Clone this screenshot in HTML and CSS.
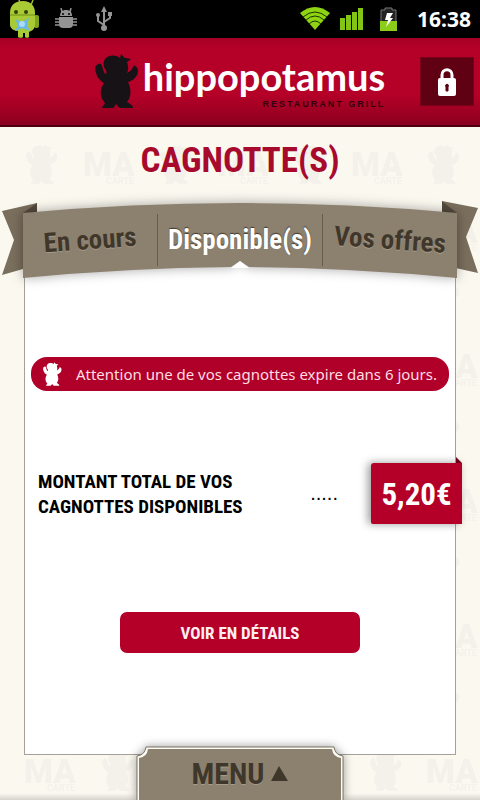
FILE: index.html
```html
<!DOCTYPE html>
<html lang="fr">
<head>
    <meta charset="UTF-8">
    <meta name="viewport" content="width=device-width, initial-scale=1.0">
    <title>Cagnotte(s)</title>
    <link rel="stylesheet" href="styles.css">
</head>
<body>
    <!-- watermark behind the whole page -->
    <svg class="watermark" aria-hidden="true">
        <defs>
            <symbol id="hippo" viewBox="0 0 44 54">
                <path d="M6 10C1 9-1 14 1 19C2 23 5 27 9 29C4 36 5 44 10 49C10 51 7 52 7 54H18C20 53 20 51 21 50C23 51 23 54 26 54H38C38 51 35 50 32 48C37 42 36 34 33 28C38 27 43 22 43 17C43 13 41 13 39 11L37 15C36 17 33 18 32 19C34 15 33 11 32 8L36 5L31 4C29 4 28 2 26 0L25 4C22 1 14 0 10 5C8 8 8 12 10 15C12 18 12 19 10 20C8 17 8 13 6 10Z"/>
            </symbol>
            <pattern id="tile" x="0" y="130" width="134" height="135" patternUnits="userSpaceOnUse">
                <use href="#hippo" x="26" y="14" width="32" height="40"/>
                <text class="wm-big" x="83" y="46">MA</text>
                <text class="wm-small" x="106" y="54">CARTE</text>
                <text class="wm-big" x="24" y="113">MA</text>
                <text class="wm-small" x="47" y="121">CARTE</text>
                <use href="#hippo" x="102" y="81" width="32" height="40"/>
            </pattern>
        </defs>
        <rect width="100%" height="100%" fill="url(#tile)"/>
    </svg>

    <div class="status">
        <svg class="droid" viewBox="0 0 30 38">
            <path d="M12 5L10 0M22 5L24 0" stroke="#9fbf2b" stroke-width="1.5"/>
            <rect x="25" y="15" width="5" height="13" rx="2" fill="#7ea31d"/>
            <path d="M1 13C1 5 6 1 14 1S26 6 26 13V26C25 30 22 31 20 32V37C20 38 16 38 16 37V33H14V37C14 38 9 38 9 37V31C5 31 1 28 1 25Z" fill="#a8ca35"/>
            <path d="M1 15H26" stroke="#6f9116"/>
            <circle cx="7" cy="12" r="2" fill="#33400c"/><circle cx="17" cy="12" r="2" fill="#33400c"/>
            <path d="M6 19L13 22L20 18L18 25L21 31L13 28L6 31L9 25Z" fill="#69b7ec"/>
            <circle cx="13" cy="24" r="3" fill="#a9dcfa"/>
        </svg>
        <svg class="bug" viewBox="0 0 22 22" fill="#949494">
            <path d="M5 8C5 4 7 2 11 2S17 4 17 8ZM4 9H18V17C18 19 16 20 14 20H8C6 20 4 19 4 17Z"/>
            <path d="M4 11H0M4 14H0M4 17H0M18 11H22M18 14H22M18 17H22M7 4L6 0M15 4L16 0" fill="none" stroke="#949494" stroke-width="1.5"/>
            <circle cx="8" cy="6" r="1" fill="#000"/><circle cx="14" cy="6" r="1" fill="#000"/>
        </svg>
        <svg class="usb" viewBox="0 0 18 26" fill="#949494">
            <path d="M9 22V4M9 19L3 15V9M9 16L15 12V8" fill="none" stroke="#949494" stroke-width="2"/>
            <path d="M9 0L12 6H6ZM13 6H17V10H13Z"/><circle cx="3" cy="9" r="2"/><circle cx="9" cy="22" r="3"/>
        </svg>
        <svg class="wifi" viewBox="0 0 30 24">
            <path d="M0 6Q15-6 30 6L15 23Z" fill="#8fd413"/>
            <path d="M3 10Q15 0 27 10M6 13Q15 5 24 13M9 17Q15 11 21 17" fill="none" stroke="#173300" stroke-width="1"/>
        </svg>
        <svg class="signal" viewBox="0 0 24 22" fill="#83c515">
            <path d="M0 10H5V22H0ZM6 7H11V22H6ZM12 4H17V22H12ZM18 0H23V22H18Z"/>
        </svg>
        <svg class="battery" viewBox="0 0 17 24">
            <path d="M5 1H12V3H16V23H1V3H5Z" fill="#232323" stroke="#777"/>
            <path d="M0 14H17V24H0Z" fill="#8ccc1b"/>
            <path d="M7 6H13L10 11H13L6 20L8 13H5Z" fill="#fff"/>
        </svg>
        <span class="clock">16:38</span>
    </div>

    <header class="header">
        <div class="logo">
            <svg class="logo-hippo" fill="#161216"><use href="#hippo"/></svg>
            <div class="logo-text">
                <span class="logo-name">hippopotamus</span>
                <span class="logo-sub">RESTAURANT GRILL</span>
            </div>
        </div>
        <button class="lock" type="button" aria-label="Connexion">
            <svg viewBox="0 0 20 28">
                <path d="M5 12V7C5 0 15 0 15 7V12" fill="none" stroke="#fff" stroke-width="3"/>
                <rect x="1" y="10" width="18" height="18" rx="2" fill="#fff"/>
                <path d="M10 16A2 2 0 0 1 11 19V23H9V19A2 2 0 0 1 10 16Z" fill="#5f0013" stroke="#5f0013"/>
            </svg>
        </button>
    </header>

    <h1 class="title">CAGNOTTE(S)</h1>

    <nav class="ribbon">
        <svg class="ribbon-bg" viewBox="0 0 480 90" preserveAspectRatio="none" aria-hidden="true">
            <path d="M2 16L37 8V70L2 80L14 45Z" fill="#7a6e5c"/>
            <path d="M478 13L442 6V70L478 78L466 42Z" fill="#7a6e5c"/>
            <path d="M23 18L37 8V18ZM457 18L442 6V18Z" fill="#544b3d"/>
            <path class="ribbon-body" d="M23 18Q240-2 457 18V83Q353 73 249 72L240 66L231 72Q127 73 23 83Z"/>
            <path d="M240 66L231 73H249Z" fill="#fff"/>
        </svg>
        <a class="tab tab-left" href="#">En cours</a>
        <a class="tab tab-active" href="#">Disponible(s)</a>
        <a class="tab tab-right" href="#">Vos offres</a>
    </nav>

    <main class="panel">
        <p class="alert">
            <svg class="alert-hippo" fill="#fff"><use href="#hippo"/></svg>
            Attention une de vos cagnottes expire dans 6 jours.
        </p>
        <div class="total">
            <h2 class="total-label">MONTANT TOTAL DE VOS<br>CAGNOTTES DISPONIBLES</h2>
            <span class="dots">.....</span>
            <strong class="price">5,20€</strong>
        </div>
        <button class="details" type="button">VOIR EN DÉTAILS</button>
    </main>

    <footer class="footer">
        <button class="menu" type="button">
            <svg class="menu-bg" viewBox="0 0 208 54" aria-hidden="true">
                <path d="M10 1H198Q199 9 207 10V56H1V10Q9 9 10 1Z" fill="#fffdf5" stroke="#7b7263"/>
                <path d="M12 3H196Q197 11 205 12V56H3V12Q11 11 12 3Z" fill="#8c816f"/>
            </svg>
            <span>MENU</span>
            <svg class="arrow" viewBox="0 0 17 15"><path d="M8 0L17 15H0Z" fill="#40372b"/></svg>
        </button>
    </footer>
</body>
</html>
```
FILE: styles.css
```css
*{
    box-sizing: border-box;
    margin: 0;
    padding: 0;
}
body{
    display: flex;
    flex-direction: column;
    min-height: 100vh;
    position: relative;
    overflow-x: hidden;
    background-color: #fbf8f0;
    font-family: "Roboto Condensed", "Liberation Sans Narrow", "Liberation Sans", sans-serif;
}
button{
    border: 0;
    font-family: inherit;
    cursor: pointer;
}
a{
    text-decoration: none;
}
.watermark{
    position: absolute;
    top: 0;
    left: 0;
    width: 100%;
    height: 100%;
    z-index: -1;
    fill: #f4f1ea;
}
.wm-big{
    font: 900 33px Roboto, sans-serif;
}
.wm-small{
    font: 700 9px Roboto, sans-serif;
}

/* status bar */
.status{
    display: flex;
    align-items: center;
    height: 38px;
    padding: 0 9px;
    background-color: #000;
}
.droid{
    width: 30px;
    height: 38px;
}
.bug{
    width: 22px;
    height: 22px;
    margin-left: 16px;
}
.usb{
    width: 18px;
    height: 26px;
    margin-left: 18px;
}
.wifi{
    width: 30px;
    height: 24px;
    margin-left: auto;
}
.signal{
    width: 24px;
    height: 22px;
    margin-left: 10px;
}
.battery{
    width: 17px;
    height: 24px;
    margin-left: 16px;
}
.clock{
    margin-left: 20px;
    color: #fff;
    font: 700 21px "Noto Sans", sans-serif;
}

/* header */
.header{
    display: grid;
    grid-template-columns: 1fr auto 1fr;
    align-items: center;
    height: 89px;
    padding: 0 6px;
    background: linear-gradient(#a70125, #b50028 12%, #b50028 65%, #8c001f);
    border-bottom: 2px solid #4d0011;
}
.logo{
    grid-column: 2;
    display: flex;
    gap: 4px;
}
.logo-hippo{
    width: 44px;
    height: 54px;
}
.logo-text{
    display: flex;
    flex-direction: column;
    align-items: flex-end;
}
.logo-name{
    color: #fff;
    font: 700 38px/44px Lato, sans-serif;
}
.logo-sub{
    color: #33000c;
    font: 700 9px/12px "Liberation Sans", sans-serif;
    letter-spacing: 2px;
}
.lock{
    justify-self: end;
    display: flex;
    align-items: center;
    justify-content: center;
    width: 54px;
    height: 49px;
    background-color: #5f0013;
    border: 1px solid #780019;
}
.lock svg{
    width: 20px;
    height: 28px;
}

.title{
    height: 68px;
    color: #a70a2d;
    font-size: 35px;
    line-height: 68px;
    text-align: center;
}

/* ribbon */
.ribbon{
    display: grid;
    grid-template-columns: 134fr 166fr 134fr;
    align-items: center;
    position: relative;
    z-index: 1;
    height: 90px;
    padding: 0 23px;
}
.ribbon-bg{
    position: absolute;
    top: 0;
    left: 0;
    width: 100%;
    height: 100%;
    z-index: -1;
    overflow: visible;
}
.ribbon-body{
    fill: #8c806f;
    filter: drop-shadow(0 0 6px rgba(0, 0, 0, .35));
}
.tab{
    color: #40372b;
    font-size: 27px;
    font-weight: 700;
    line-height: 52px;
    text-align: center;
    text-shadow: 0 1px 0 #a69b8a;
}
.tab-left{
    transform: rotate(-4deg);
}
.tab-right{
    transform: rotate(4deg);
}
.tab-active{
    color: #fff;
    border-left: 1px solid #675c4c;
    border-right: 1px solid #675c4c;
    text-shadow: 0 -1px 1px #40372b;
}

/* panel */
.panel{
    flex: 1;
    display: flex;
    flex-direction: column;
    margin: -26px 24px 0;
    padding: 97px 6px 0;
    background-color: #fff;
    border: 1px solid #a5a19a;
}
.alert{
    display: flex;
    align-items: center;
    gap: 14px;
    height: 34px;
    padding: 0 12px;
    border-radius: 16px;
    background-color: #b00029;
    color: #ffdce2;
    font: 15px/32px "Noto Sans", sans-serif;
    white-space: nowrap;
}
.alert-hippo{
    width: 20px;
    height: 24px;
}
.total{
    display: flex;
    align-items: center;
    margin: 72px -13px 0 7px;
}
.total-label{
    color: #000;
    font-size: 19px;
    line-height: 25px;
}
.dots{
    margin-left: auto;
    margin-right: 33px;
    font: 20px "Liberation Sans", sans-serif;
}
.price{
    position: relative;
    width: 91px;
    height: 61px;
    border-radius: 3px 0 0 2px;
    background-color: #b40029;
    box-shadow: -3px 0 8px rgba(0, 0, 0, .4);
    color: #fff;
    font-size: 31px;
    line-height: 64px;
    text-align: center;
}
/* folded corner */
.price::before{
    content: '';
    position: absolute;
    top: -6px;
    right: 0;
    border-left: 6px solid #70001a;
    border-top: 6px solid transparent;
}
.details{
    align-self: center;
    width: 240px;
    height: 41px;
    margin-top: 88px;
    border-radius: 7px;
    background-color: #b40029;
    color: #ffeef1;
    font-size: 17px;
    font-weight: 700;
}

/* footer */
.footer{
    display: flex;
    justify-content: center;
    height: 45px;
    background: linear-gradient(transparent 85%, #d6d3cc);
}
.menu{
    display: flex;
    align-items: center;
    justify-content: center;
    gap: 7px;
    position: relative;
    z-index: 1;
    width: 208px;
    height: 54px;
    margin-top: -9px;
    background: none;
    color: #40372b;
    font-size: 30px;
    font-weight: 700;
    text-shadow: 0 1px 0 #a69b8a;
}
.menu-bg{
    position: absolute;
    top: 0;
    left: 0;
    width: 208px;
    height: 54px;
    z-index: -1;
    filter: drop-shadow(0 0 5px rgba(0, 0, 0, .4));
}
.arrow{
    width: 17px;
    height: 15px;
}
```
